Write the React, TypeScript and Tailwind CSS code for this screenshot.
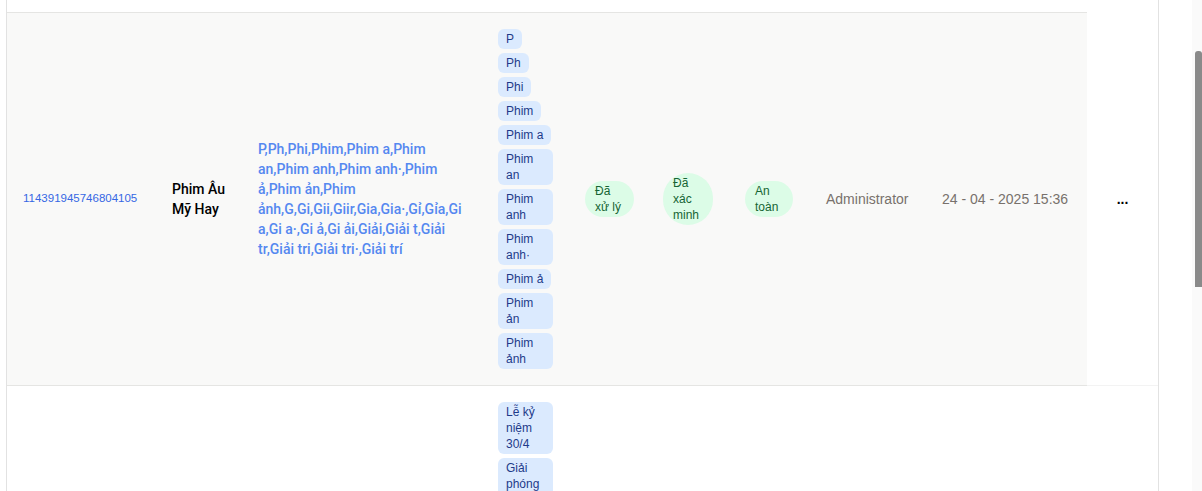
import React from 'react';

const keywords =
  'P,Ph,Phi,Phim,Phim a,Phim an,Phim anh,Phim anh·,Phim ả,Phim ản,Phim ảnh,G,Gi,Gii,Giir,Gia,Gia·,Gỉ,Gỉa,Gi a,Gi a·,Gi ả,Gi ải,Giải,Giải t,Giải tr,Giải tri,Giải tri·,Giải trí';

const tags = ['P', 'Ph', 'Phi', 'Phim', 'Phim a', 'Phim an', 'Phim anh', 'Phim anh·', 'Phim ả', 'Phim ản', 'Phim ảnh'];
const tags2 = ['Lễ kỷ niệm 30/4', 'Giải phóng miền Nam', 'Thống nhất đất nước', 'Lịch sử'];

const Tag = ({ text }: { text: string }) => (
  <span className="w-fit max-w-full rounded-md bg-[#dbeafe] px-2 py-0.5 text-xs text-[#1e3a8a]">{text}</span>
);

const Status = ({ text, w }: { text: string; w: string }) => (
  <span className={`inline-block rounded-full bg-[#dcfce7] px-2.5 py-0.5 text-xs text-[#166534] ${w}`}>{text}</span>
);

export default function App() {
  return (
    <div className="flex h-[491px] w-[1202px] overflow-hidden bg-white font-['Liberation_Sans',sans-serif]">
      <div className="w-[6px] shrink-0" />
      <div className="flex w-[1153px] shrink-0 flex-col border-x border-[#e2e2e2]">
        {/* header scrolled out of view */}
        <div className="flex shrink-0">
          <div className="h-[13px] w-[1080px] border-b border-[#e5e5e3]" />
          <div className="h-[13px] flex-1" />
        </div>

        <div className="flex shrink-0">
          <div className="flex w-[1080px] items-center border-b border-[#e5e5e3] bg-[#f9f9f8]">
            <div className="w-[149px] px-4 text-[11.5px] font-medium text-[#3567e4]">114391945746804105</div>
            <div className="w-[86px] pl-4 pr-3 font-['Roboto',sans-serif] text-sm font-medium leading-5 text-black">Phim Âu Mỹ Hay</div>
            <div className="w-[240px] px-4 font-['Roboto',sans-serif] text-sm font-medium leading-5 text-[#5588f0]">{keywords}</div>
            <div className="flex w-[87px] flex-col gap-1 px-4 py-4">
              {tags.map(t => (
                <Tag key={t} text={t} />
              ))}
            </div>
            <div className="w-[78px] pl-4">
              <Status text="Đã xử lý" w="w-[49px]" />
            </div>
            <div className="w-[82px] pl-4">
              <Status text="Đã xác minh" w="w-[50px]" />
            </div>
            <div className="w-[81px] pl-4">
              <Status text="An toàn" w="w-[48px]" />
            </div>
            <div className="w-[116px] px-4 text-sm text-[#78716c]">Administrator</div>
            <div className="flex-1 px-4 text-sm text-[#78716c]">24 - 04 - 2025 15:36</div>
          </div>
          <div className="flex flex-1 items-center justify-center border-b border-[#f3f3f3] bg-white text-sm font-bold text-black">
            ...
          </div>
        </div>

        <div className="flex shrink-0">
          <div className="flex w-[1080px] items-start bg-white">
            <div className="w-[149px]" />
            <div className="w-[86px]" />
            <div className="w-[240px]" />
            <div className="flex w-[87px] flex-col gap-1 px-4 py-4">
              {tags2.map(t => (
                <Tag key={t} text={t} />
              ))}
            </div>
          </div>
          <div className="flex-1 bg-white" />
        </div>
      </div>

      {/* scrollbar */}
      <div className="flex flex-1 justify-end">
        <div className="flex w-[10px] flex-col bg-[#fafafa] pl-[3px] pt-[51px]">
          <div className="h-[236px] w-[7px] rounded-t-[3px] bg-[#8a8a8a]" />
        </div>
      </div>
    </div>
  );
}
